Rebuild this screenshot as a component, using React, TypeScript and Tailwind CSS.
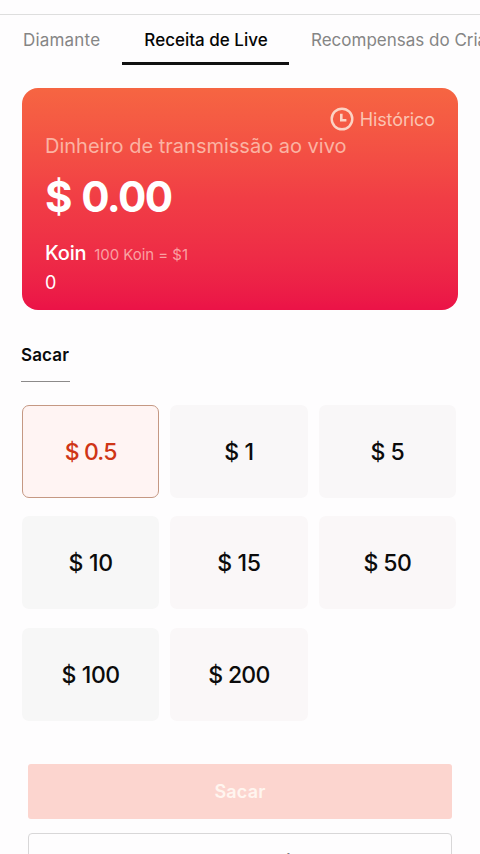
import React from "react";

const amounts = ["0.5", "1", "5", "10", "15", "50", "100", "200"];

const tileColors = [
  "border border-[#c59883] bg-[#fff4f3] text-[#cf3516] tracking-[-0.9px]",
  "bg-[#f9f7f8] text-[#0b0b0b] tracking-[-0.3px]",
  "bg-[#f9f7f8] text-[#0b0b0b] tracking-[-0.5px]",
  "bg-[#f7f7f7] text-[#0b0b0b] tracking-[-0.3px]",
  "bg-[#faf7f8] text-[#0b0b0b] tracking-[-0.3px]",
  "bg-[#faf7f8] text-[#0b0b0b] tracking-[-0.6px]",
  "bg-[#f7f7f7] text-[#0b0b0b] tracking-[-0.4px]",
  "bg-[#faf7f8] text-[#0b0b0b] tracking-[-0.7px]",
];

function Tabs() {
  return (
    <nav className="flex h-[53px] w-[600px] border-t border-[#dedede] text-[17px] leading-[50px] whitespace-nowrap text-[#858585]">
      <span className="ml-[23px] w-[99px] tracking-[0.2px]">Diamante</span>
      <span className="h-[50px] w-[167px] border-b-[3px] border-[#111] pl-[1px] text-center font-medium text-[#050505]">
        Receita de Live
      </span>
      <span className="ml-[22px]">Recompensas do Criador</span>
    </nav>
  );
}

function BalanceCard() {
  return (
    <section className="ml-[22px] flex h-[222px] w-[436px] flex-col rounded-[16px] bg-linear-to-b from-[#f66542] via-[#f13d45] to-[#eb1247] px-[23px] pt-[18px] text-white">
      <div className="flex h-[26px] items-center justify-end gap-[6px] text-[18px] tracking-[-0.1px] text-[#fbc3b1]">
        <svg width="24" height="24" viewBox="0 0 24 24" fill="none" stroke="#fcd3c4">
          <circle cx="12" cy="12" r="10.3" strokeWidth="2.4" />
          <path d="M11.3 6.8V13.2H16.4" strokeWidth="2.6" />
        </svg>
        <span>Histórico</span>
      </div>
      <p className="h-[28px] text-[20px] leading-[28px] text-[#fbb3a3]">Dinheiro de transmissão ao vivo</p>
      <p className="mt-[12px] h-[50px] text-[42px] leading-[50px] font-bold tracking-[-1.6px] [word-spacing:2px]">
        $ 0.00
      </p>
      <p className="mt-[17px] flex h-[28px] items-baseline gap-[8px] leading-[28px]">
        <span className="text-[20px] font-medium tracking-[-0.2px]">Koin</span>
        <span className="text-[15px] tracking-[-0.05px] text-[#faa0a2]">100 Koin = $1</span>
      </p>
      <p className="mt-[2px] text-[18px] leading-[28px]">0</p>
    </section>
  );
}

export default function App() {
  return (
    <main className="h-[854px] w-[480px] overflow-hidden bg-[#fefdfe] pt-[14px] font-['Inter','Liberation_Sans',sans-serif]">
      <Tabs />
      <div className="h-[21px]" />
      <BalanceCard />
      <h2 className="mt-[31px] ml-[21px] h-[41px] w-[49px] border-b border-[#8c8a8a] text-[17px] leading-[28px] font-semibold tracking-[0.15px] text-[#0b0b0b]">
        Sacar
      </h2>
      <div className="mt-[23px] ml-[22px] grid w-[434px] grid-cols-3 gap-x-[11px] gap-y-[18.4px]">
        {amounts.map((amount, i) => (
          <button
            key={amount}
            className={`flex h-[93px] items-center justify-center rounded-[7px] pt-[1.5px] text-[23px] font-medium ${tileColors[i]}`}
          >
            $ {amount}
          </button>
        ))}
      </div>
      <button className="mt-[43px] ml-[28px] block h-[55px] w-[424px] rounded-[3px] bg-[#fcd5cf] text-[18px] font-semibold tracking-[0.2px] text-[#fff5ef]">
        Sacar
      </button>
      <button className="mt-[14px] ml-[28px] block h-[56px] w-[424px] rounded-[4px] border border-[#d8d7d8] pt-[2px] pr-[24px] text-[17px] font-semibold text-[#0b0b0b]">
        Recarga de telemóvel
      </button>
    </main>
  );
}
